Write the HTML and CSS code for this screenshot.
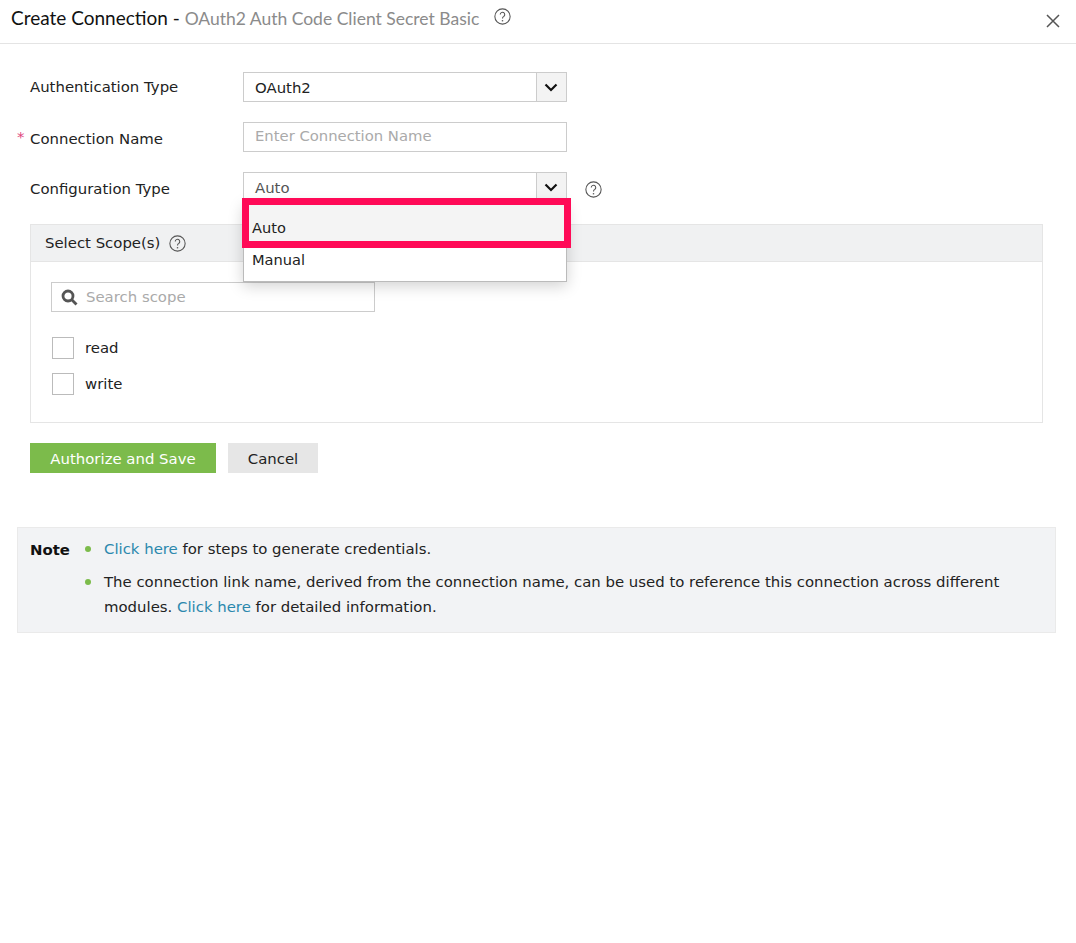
FILE: index.html
```html
<!DOCTYPE html>
<html lang="en">
<head>
    <meta charset="UTF-8">
    <meta name="viewport" content="width=device-width, initial-scale=1.0">
    <title>Create Connection</title>
    <link rel="stylesheet" href="styles.css">
</head>
<body>
    <header class="header">
        <h1 class="title">Create Connection - <span class="title-sub">OAuth2 Auth Code Client Secret Basic</span></h1>
        <svg class="help help-title" viewBox="0 0 16 16"><circle cx="8" cy="8" r="7.2"/><path d="M5.9 6.2a2.1 2.1 0 1 1 3.3 1.7c-.8.5-1.2 1-1.2 1.9"/><path class="dot" d="M8 11.4v1.2"/></svg>
        <svg class="close" viewBox="0 0 14 14"><path d="M1 1l12 12M13 1L1 13"/></svg>
    </header>

    <main class="content">
        <div class="row">
            <label class="label label-up">Authentication Type</label>
            <div class="select">
                <span class="select-value dark">OAuth2</span>
                <span class="select-arrow"><svg viewBox="0 0 14 9"><path d="M1.5 1.5L7 7l5.5-5.5"/></svg></span>
            </div>
        </div>
        <div class="row">
            <label class="label required">Connection Name</label>
            <div class="input">Enter Connection Name</div>
        </div>
        <div class="row row-last">
            <label class="label">Configuration Type</label>
            <div class="select-wrap">
                <div class="select">
                    <span class="select-value">Auto</span>
                    <span class="select-arrow"><svg viewBox="0 0 14 9"><path d="M1.5 1.5L7 7l5.5-5.5"/></svg></span>
                </div>
                <ul class="menu">
                    <li class="menu-item active">Auto</li>
                    <li class="menu-item">Manual</li>
                </ul>
                <div class="highlight"></div>
            </div>
            <svg class="help help-row" viewBox="0 0 16 16"><circle cx="8" cy="8" r="7.2"/><path d="M5.9 6.2a2.1 2.1 0 1 1 3.3 1.7c-.8.5-1.2 1-1.2 1.9"/><path class="dot" d="M8 11.4v1.2"/></svg>
        </div>

        <section class="scope">
            <div class="scope-head">
                <span>Select Scope(s)</span>
                <svg class="help" viewBox="0 0 16 16"><circle cx="8" cy="8" r="7.2"/><path d="M5.9 6.2a2.1 2.1 0 1 1 3.3 1.7c-.8.5-1.2 1-1.2 1.9"/><path class="dot" d="M8 11.4v1.2"/></svg>
            </div>
            <div class="scope-body">
                <div class="search">
                    <svg class="search-icon" viewBox="0 0 17 17"><circle cx="7" cy="7" r="5"/><path d="M10.8 10.8L15.5 15.5"/></svg>
                    <span>Search scope</span>
                </div>
                <div class="check"><span class="box"></span>read</div>
                <div class="check"><span class="box"></span>write</div>
            </div>
        </section>

        <div class="buttons">
            <button class="btn btn-green">Authorize and Save</button>
            <button class="btn btn-grey">Cancel</button>
        </div>
    </main>

    <aside class="note">
        <b class="note-label">Note</b>
        <ul class="note-list">
            <li><a href="#">Click here</a> for steps to generate credentials.</li>
            <li>The connection link name, derived from the connection name, can be used to reference this connection across different modules. <a href="#">Click here</a> for detailed information.</li>
        </ul>
    </aside>
</body>
</html>
```

FILE: styles.css
```css
body {
    margin: 0;
    background: #fff;
    color: #222;
    font-family: "DejaVu Sans", sans-serif;
    font-size: 14.9px;
}

/* header */
.header {
    display: flex;
    align-items: center;
    height: 34px;
    padding: 0 15px 9px 11px;
    border-bottom: 1px solid #e4e4e4;
}
.title {
    margin: 0;
    font-family: Lato, sans-serif;
    font-size: 19px;
    font-weight: 400;
    color: #111;
    white-space: nowrap;
}
.title-sub {
    font-size: 17.5px;
    color: #8b8b8b;
}
.help {
    width: 17px;
    height: 17px;
    fill: none;
    stroke: #555;
    stroke-width: 1;
    flex: none;
}
.help .dot {
    stroke-width: 1.3;
}
.help-title {
    margin-left: 15px;
    margin-bottom: 2px;
}
.close {
    width: 14px;
    height: 14px;
    margin-left: auto;
    margin-top: 8px;
    margin-right: 1px;
    fill: none;
    stroke: #555;
    stroke-width: 1.5;
}

/* form */
.content {
    padding: 28px 33px 0 30px;
}
.row {
    display: flex;
    align-items: center;
    height: 30px;
    margin-bottom: 20px;
}
.row-last {
    margin-bottom: 22px;
}
.label {
    position: relative;
    width: 213px;
    flex: none;
    padding-top: 4px;
}
.label-up {
    padding-top: 0;
}
.required::before {
    content: "*";
    position: absolute;
    left: -13px;
    top: 2px;
    color: #e0457b;
}
.select-wrap {
    position: relative;
}
.select, .input {
    width: 324px;
    height: 30px;
    box-sizing: border-box;
    border: 1px solid #ccc;
    background: #fff;
}
.select {
    display: flex;
}
.select-value {
    flex: 1;
    padding: 6px 11px 0;
    color: #555;
}
.select-value.dark {
    color: #222;
}
.select-arrow {
    display: flex;
    align-items: center;
    justify-content: center;
    width: 30px;
    padding-right: 2px;
    box-sizing: border-box;
    border-left: 1px solid #ccc;
    background: #f3f3f3;
}
.select-arrow svg {
    width: 14px;
    height: 9px;
    fill: none;
    stroke: #111;
    stroke-width: 2.2;
}
.input {
    padding: 4px 11px 0;
    font-size: 14.8px;
    color: #aaa;
}
.help-row {
    margin-left: 18px;
    margin-top: 5px;
}

/* dropdown */
.menu {
    position: absolute;
    z-index: 2;
    top: 30px;
    left: 0;
    width: 324px;
    height: 80px;
    box-sizing: border-box;
    margin: 0;
    padding: 0;
    list-style: none;
    background: #fff;
    border: 1px solid #bbb;
    border-top: 0;
    box-shadow: 0 4px 14px rgba(0, 0, 0, .18);
}
.menu-item {
    height: 32px;
    padding: 4px 8px 0;
    box-sizing: border-box;
    font-size: 14.6px;
    color: #222;
}
.menu-item.active {
    height: 45px;
    padding-top: 17px;
    background: #f4f4f4;
}
.highlight {
    position: absolute;
    z-index: 3;
    top: 26px;
    left: -1px;
    width: 329px;
    height: 50px;
    box-sizing: border-box;
    border: 7px solid #ff0a57;
}

/* scope panel */
.scope {
    border: 1px solid #e5e5e5;
    height: 199px;
    box-sizing: border-box;
}
.scope-head {
    display: flex;
    align-items: center;
    gap: 9px;
    height: 36px;
    padding-left: 14px;
    background: #f0f1f2;
    border-bottom: 1px solid #e5e5e5;
}
.scope-body {
    padding: 20px 20px 0;
}
.search {
    display: flex;
    align-items: center;
    width: 324px;
    height: 30px;
    box-sizing: border-box;
    border: 1px solid #ccc;
    padding-left: 9px;
    margin-bottom: 25px;
    color: #aaa;
}
.search-icon {
    width: 17px;
    height: 17px;
    margin-right: 8px;
    fill: none;
    stroke: #555;
    stroke-width: 2.8;
}
.check {
    display: flex;
    align-items: center;
    height: 22px;
    margin-bottom: 14px;
    padding-left: 1px;
}
.box {
    width: 20px;
    height: 20px;
    margin-right: 11px;
    border: 1px solid #bbb;
}

/* buttons */
.buttons {
    display: flex;
    gap: 12px;
    margin-top: 20px;
}
.btn {
    height: 30px;
    border: 0;
    padding: 1px 0 0;
    font-family: inherit;
    font-size: 14.9px;
}
.btn-green {
    width: 186px;
    background: #7cbb4b;
    color: #fff;
}
.btn-grey {
    width: 90px;
    background: #e6e6e6;
    color: #222;
}

/* note */
.note {
    display: flex;
    margin: 54px 20px 0 17px;
    height: 106px;
    box-sizing: border-box;
    padding: 9px 12px 0 12px;
    background: #f2f3f5;
    border: 1px solid #eaeaea;
}
.note-label {
    width: 74px;
    flex: none;
    color: #111;
    padding-top: 4px;
}
.note-list {
    margin: 0;
    padding: 0;
    list-style: none;
    line-height: 25px;
}
.note-list li {
    position: relative;
    margin-bottom: 8px;
}
.note-list li::before {
    content: "";
    position: absolute;
    left: -19px;
    top: 9px;
    width: 6px;
    height: 6px;
    border-radius: 50%;
    background: #7cbb4b;
}
.note-list a {
    color: #2b88ad;
    text-decoration: none;
}
```
